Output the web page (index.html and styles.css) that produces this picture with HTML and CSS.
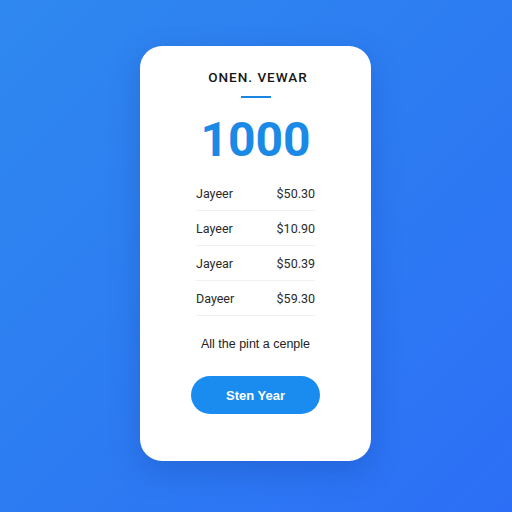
FILE: index.html
```html
<!DOCTYPE html>
<html lang="en">
<head>
    <meta charset="UTF-8">
    <meta name="viewport" content="width=device-width, initial-scale=1.0">
    <title>Onen Vewar</title>
    <link rel="stylesheet" href="styles.css">
</head>
<body>
    <div class="card">
        <!-- Cabeçalho -->
        <div class="title">ONEN. VEWAR</div>
        <div class="rule"></div>
        <div class="total">1000</div>

        <!-- Lista de valores -->
        <div class="list">
            <div class="row"><span>Jayeer</span><span>$50.30</span></div>
            <div class="row"><span>Layeer</span><span>$10.90</span></div>
            <div class="row"><span>Jayear</span><span>$50.39</span></div>
            <div class="row"><span>Dayeer</span><span>$59.30</span></div>
        </div>

        <p class="note">All the pint a cenple</p>
        <button class="btn">Sten Year</button>
    </div>
</body>
</html>
```

FILE: styles.css
```css
/* Estilos Gerais */
* {
    box-sizing: border-box;
    margin: 0;
    padding: 0;
    font-family: 'Roboto', 'Liberation Sans', sans-serif;
}

body {
    background: linear-gradient(135deg, #2f88ef 0%, #2d7cf2 50%, #2c6ff6 100%);
    display: flex;
    justify-content: center;
    align-items: flex-start;
    height: 100vh;
    padding-top: 46px;
    padding-right: 1px;
}

.card {
    width: 231px;
    height: 415px;
    background: #fff;
    border-radius: 22px;
    box-shadow: 0 10px 30px rgba(10, 50, 140, 0.25);
    display: flex;
    flex-direction: column;
    align-items: center;
    padding-top: 22px;
}

.title {
    font-size: 13.5px;
    line-height: 18px;
    font-weight: 500;
    letter-spacing: 1px;
    color: #161616;
    margin-left: 5px;
}

.rule {
    width: 30px;
    height: 2px;
    background: #1a86e0;
    margin-top: 10px;
}

.total {
    font-size: 48px;
    line-height: 56px;
    font-weight: 700;
    color: #1a8ae6;
    margin-top: 14px;
}

/* Lista */
.list {
    width: 119px;
    margin-top: 8px;
}

.row {
    display: flex;
    justify-content: space-between;
    align-items: center;
    height: 35px;
    border-bottom: 1px solid #eef0f2;
    font-family: 'Liberation Sans', Arial, sans-serif;
    font-size: 12.5px;
    color: #2a2a2a;
}

.note {
    font-family: 'Liberation Sans', Arial, sans-serif;
    font-size: 12.5px;
    color: #222;
    margin-top: 21px;
}

.btn {
    width: 129px;
    height: 38px;
    margin-top: 25px;
    background-color: #1a8cf0;
    color: #fff;
    font-family: 'Liberation Sans', Arial, sans-serif;
    font-size: 13px;
    font-weight: 700;
    border: none;
    border-radius: 19px;
    cursor: pointer;
}
```
